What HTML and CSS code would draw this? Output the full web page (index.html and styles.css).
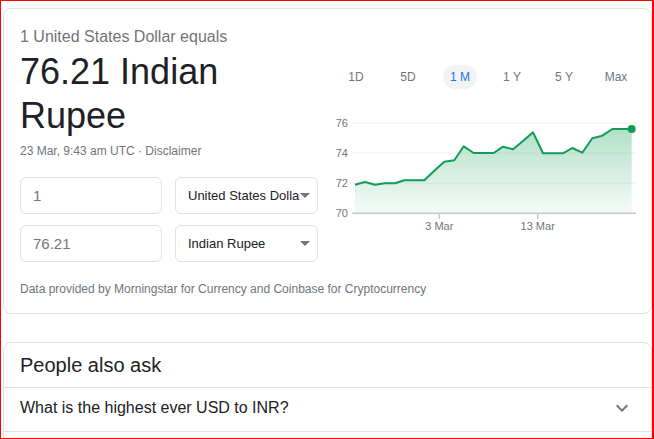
FILE: index.html
```html
<!DOCTYPE html>
<html>
<head>
<meta charset="utf-8">
<link rel="stylesheet" href="styles.css">
</head>
<body>
<div class="frame">
  <div class="card converter">
    <div class="cols">
      <div class="left">
        <div class="equals">1 United States Dollar equals</div>
        <div class="result">76.21 Indian Rupee</div>
        <div class="meta">23 Mar, 9:43 am UTC · Disclaimer</div>
        <div class="form">
          <div class="row">
            <div class="field">1</div>
            <div class="select"><span class="sel-text">United States Dollar</span><span class="caret"></span></div>
          </div>
          <div class="row">
            <div class="field">76.21</div>
            <div class="select"><span class="sel-text">Indian Rupee</span><span class="caret"></span></div>
          </div>
        </div>
      </div>
      <div class="right">
        <div class="tabs">
          <div class="tab"><span class="pill">1D</span></div>
          <div class="tab"><span class="pill">5D</span></div>
          <div class="tab"><span class="pill active">1 M</span></div>
          <div class="tab"><span class="pill">1 Y</span></div>
          <div class="tab"><span class="pill">5 Y</span></div>
          <div class="tab"><span class="pill">Max</span></div>
        </div>
        <svg class="chart" width="315" height="125" viewBox="330 110 315 125">
          <defs>
            <linearGradient id="g" x1="0" y1="129" x2="0" y2="213" gradientUnits="userSpaceOnUse">
              <stop offset="0" stop-color="#0f9d58" stop-opacity="0.32"/>
              <stop offset="1" stop-color="#0f9d58" stop-opacity="0.04"/>
            </linearGradient>
          </defs>
          <line x1="352" y1="123" x2="636" y2="123" stroke="#efefef" stroke-width="1"/>
          <line x1="352" y1="153" x2="636" y2="153" stroke="#efefef" stroke-width="1"/>
          <line x1="352" y1="183" x2="636" y2="183" stroke="#efefef" stroke-width="1"/>
          <path d="M355,184.7 L365,182 L375,184.7 L385,183.3 L395,183.3 L404.3,180.3 L414.3,180.3 L424.3,180.3 L434.3,170.7 L444.3,161.7 L454.3,160.3 L463.7,146.3 L473.7,153 L483.7,153 L493.7,153 L503,146.7 L513,149.3 L523,141 L533,132.3 L543,153.3 L553,153.3 L563,153.3 L572.3,148 L582.3,152.7 L592.3,138.3 L602.3,135.7 L612.3,129 L622.3,129 L631.7,129 L631.7,213 L355,213 Z" fill="url(#g)"/>
          <line x1="352" y1="213.3" x2="636" y2="213.3" stroke="#c8c8c8" stroke-width="1.5"/>
          <line x1="439.3" y1="213" x2="439.3" y2="219" stroke="#c8c8c8" stroke-width="1.5"/>
          <line x1="537.7" y1="213" x2="537.7" y2="219" stroke="#c8c8c8" stroke-width="1.5"/>
          <path d="M355,184.7 L365,182 L375,184.7 L385,183.3 L395,183.3 L404.3,180.3 L414.3,180.3 L424.3,180.3 L434.3,170.7 L444.3,161.7 L454.3,160.3 L463.7,146.3 L473.7,153 L483.7,153 L493.7,153 L503,146.7 L513,149.3 L523,141 L533,132.3 L543,153.3 L553,153.3 L563,153.3 L572.3,148 L582.3,152.7 L592.3,138.3 L602.3,135.7 L612.3,129 L622.3,129 L631.7,129" fill="none" stroke="#0f9d58" stroke-width="2" stroke-linejoin="round"/>
          <circle cx="631.7" cy="129" r="4" fill="#0f9d58"/>
          <g class="axis-text">
            <text x="348" y="127" text-anchor="end">76</text>
            <text x="348" y="157" text-anchor="end">74</text>
            <text x="348" y="187" text-anchor="end">72</text>
            <text x="348" y="217" text-anchor="end">70</text>
            <text x="439.3" y="230" text-anchor="middle">3 Mar</text>
            <text x="537.7" y="230" text-anchor="middle">13 Mar</text>
          </g>
        </svg>
      </div>
    </div>
    <div class="source">Data provided by Morningstar for Currency and Coinbase for Cryptocurrency</div>
  </div>

  <div class="card paa">
    <div class="paa-title">People also ask</div>
    <div class="question">
      <span>What is the highest ever USD to INR?</span>
      <svg class="chev" width="24" height="24" viewBox="0 0 24 24"><path d="M16.59 8.59L12 13.17 7.41 8.59 6 10l6 6 6-6z" fill="#70757a"/></svg>
    </div>
  </div>
</div>
</body>
</html>
```

FILE: styles.css
```css
* { box-sizing: border-box; }

html, body {
  margin: 0;
  padding: 0;
  background: #fff;
}

body {
  font-family: "Liberation Sans", Arial, sans-serif;
  color: #202124;
}

.frame {
  width: 654px;
  height: 439px;
  border: 1px solid #ff0000;
  border-right-width: 2px;
  padding: 7px 0 0 2px;
  overflow: hidden;
}

.card {
  border: 1px solid #dfe1e5;
  border-radius: 8px;
  background: #fff;
}

.converter {
  padding: 18px 5px 16px 16px;
}

.cols {
  display: flex;
  align-items: flex-start;
}

.left {
  width: 298px;
  flex: none;
}

.equals {
  font-size: 16px;
  line-height: 20px;
  color: #70757a;
}

.result {
  margin-top: 3px;
  font-size: 36px;
  line-height: 44px;
  color: #202124;
}

.meta {
  margin-top: 5px;
  font-size: 12px;
  line-height: 16px;
  color: #70757a;
}

.form {
  margin-top: 18px;
  display: flex;
  flex-direction: column;
  gap: 11px;
}

.row {
  display: flex;
  gap: 13px;
}

.field {
  width: 142px;
  height: 37px;
  border: 1px solid #dfe1e5;
  border-radius: 6px;
  padding: 0 12px;
  display: flex;
  align-items: center;
  font-size: 15px;
  color: #70757a;
}

.select {
  position: relative;
  width: 143px;
  height: 37px;
  border: 1px solid #dfe1e5;
  border-radius: 6px;
  padding: 0 12px;
  display: flex;
  align-items: center;
  font-size: 13px;
  color: #202124;
}

.sel-text {
  display: block;
  width: 112px;
  white-space: nowrap;
  overflow: hidden;
}

.caret {
  position: absolute;
  right: 7px;
  top: 50%;
  margin-top: -3px;
  width: 0;
  height: 0;
  border-left: 5px solid transparent;
  border-right: 5px solid transparent;
  border-top: 5px solid #70757a;
}

.right {
  margin-left: 12px;
  width: 315px;
  flex: none;
}

.tabs {
  margin-top: 38px;
  display: flex;
  width: 312px;
}

.tab {
  width: 52px;
  display: flex;
  justify-content: center;
}

.pill {
  height: 24px;
  line-height: 24px;
  padding: 0 7px;
  border-radius: 12px;
  font-size: 12px;
  color: #70757a;
}

.pill.active {
  background: #f1f3f4;
  color: #1a73e8;
}

.chart {
  display: block;
  margin-top: 21px;
}

.axis-text text {
  font-family: "Liberation Sans", Arial, sans-serif;
  font-size: 11px;
  fill: #70757a;
}

.source {
  margin-top: 19px;
  font-size: 12px;
  line-height: 16px;
  color: #70757a;
}

.paa {
  margin-top: 28px;
  height: 120px;
}

.paa-title {
  padding: 10px 16px;
  font-size: 20px;
  line-height: 24px;
  color: #202124;
  border-bottom: 1px solid #dfe1e5;
}

.question {
  height: 44px;
  padding: 10px 17px 0 16px;
  display: flex;
  justify-content: space-between;
  align-items: flex-start;
  font-size: 16px;
  line-height: 20px;
  color: #202124;
  border-bottom: 1px solid #dfe1e5;
}

.chev {
  display: block;
  margin-top: -2px;
}
```
